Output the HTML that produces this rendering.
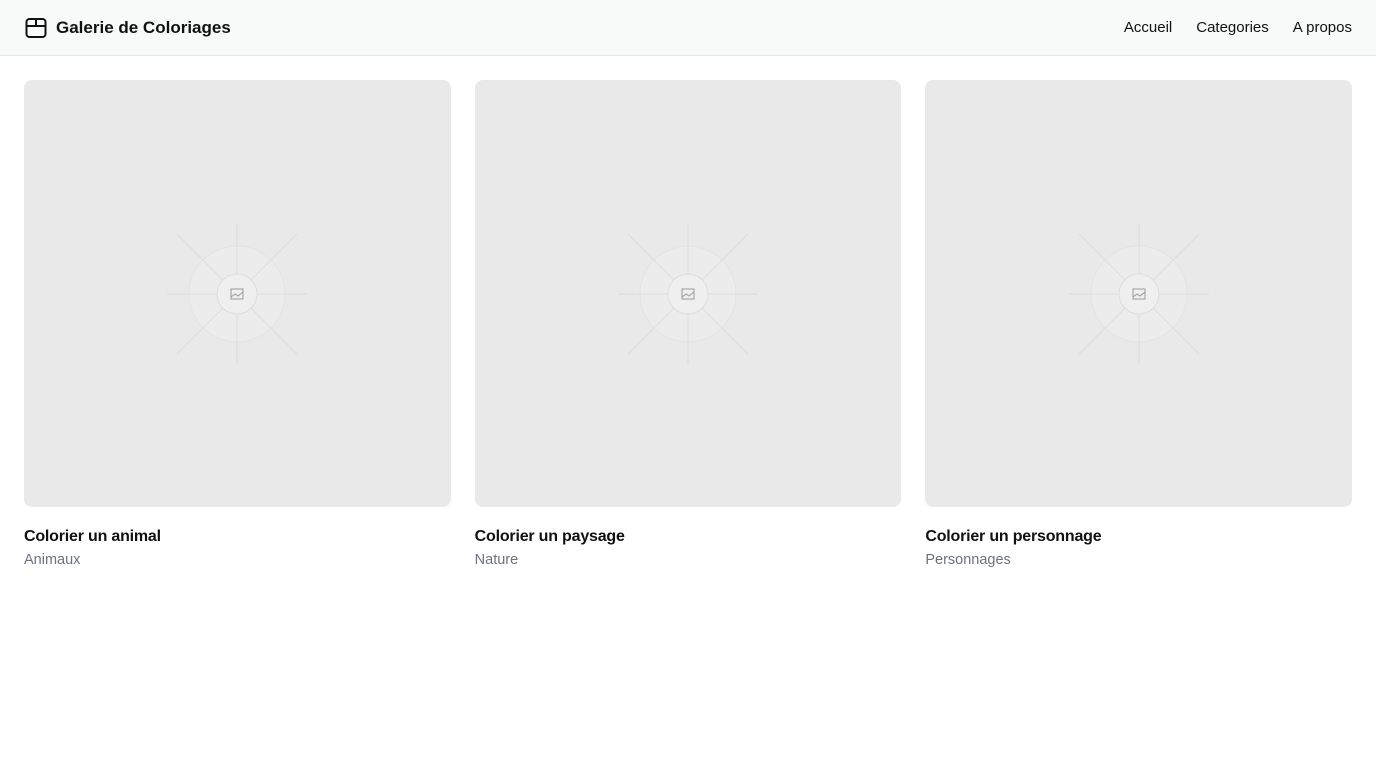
<!DOCTYPE html>
<html><head><meta charset="utf-8"><style>
*{box-sizing:border-box;margin:0;padding:0}
body{width:1376px;height:768px;background:#fff;font-family:"Liberation Sans",sans-serif;color:#111;overflow:hidden}
header{height:56px;background:#f8fafa;border-bottom:1px solid #e3e8e8;display:flex;align-items:center;justify-content:space-between;padding:0 24px}
.logo{display:flex;align-items:center;gap:8px;font-weight:bold;font-size:17px}
nav{display:flex;gap:24px;font-size:15px}
.grid{display:flex;gap:24px;padding:24px 24px 0}
.card{width:427px}
.img{height:427px;background:#e9e9e9;border-radius:8px;display:flex;align-items:center;justify-content:center}
.t{font-weight:bold;font-size:16px;margin-top:20px;line-height:20px;letter-spacing:-0.2px}
.s{color:#6b7280;font-size:14.5px;margin-top:5px}
</style></head><body>
<header><div class="logo"><svg width="24" height="24" viewBox="0 0 24 24" fill="none" stroke="#111" stroke-width="2" stroke-linejoin="round"><rect x="2.5" y="3" width="19" height="18" rx="3"/><path d="M2.5 10h19M12 3v7"/></svg>Galerie de Coloriages</div>
<nav><span>Accueil</span><span>Categories</span><span>A propos</span></nav></header>
<div class="grid">
<div class="card"><div class="img"><svg width="140" height="140" viewBox="0 0 140 140"><g stroke="#dcdcdc" stroke-width="1"><path d="M70 0v140M0 70h140M10 10l120 120M130 10L10 130"/></g><circle cx="70" cy="70" r="48" fill="#ececec" stroke="#e3e3e3"/><g stroke="#dedede"><path d="M70 22v96M22 70h96M36 36l68 68M104 36l-68 68"/></g><circle cx="70" cy="70" r="20" fill="#efefef" stroke="#dcdcdc"/><rect x="64" y="65" width="12" height="10" fill="none" stroke="#999" stroke-width="1"/><path d="M64 73l4-3 3 2 5-4" fill="none" stroke="#999"/></svg></div><div class="t">Colorier un animal</div><div class="s">Animaux</div></div>
<div class="card"><div class="img"><svg width="140" height="140" viewBox="0 0 140 140"><g stroke="#dcdcdc" stroke-width="1"><path d="M70 0v140M0 70h140M10 10l120 120M130 10L10 130"/></g><circle cx="70" cy="70" r="48" fill="#ececec" stroke="#e3e3e3"/><g stroke="#dedede"><path d="M70 22v96M22 70h96M36 36l68 68M104 36l-68 68"/></g><circle cx="70" cy="70" r="20" fill="#efefef" stroke="#dcdcdc"/><rect x="64" y="65" width="12" height="10" fill="none" stroke="#999" stroke-width="1"/><path d="M64 73l4-3 3 2 5-4" fill="none" stroke="#999"/></svg></div><div class="t">Colorier un paysage</div><div class="s">Nature</div></div>
<div class="card"><div class="img"><svg width="140" height="140" viewBox="0 0 140 140"><g stroke="#dcdcdc" stroke-width="1"><path d="M70 0v140M0 70h140M10 10l120 120M130 10L10 130"/></g><circle cx="70" cy="70" r="48" fill="#ececec" stroke="#e3e3e3"/><g stroke="#dedede"><path d="M70 22v96M22 70h96M36 36l68 68M104 36l-68 68"/></g><circle cx="70" cy="70" r="20" fill="#efefef" stroke="#dcdcdc"/><rect x="64" y="65" width="12" height="10" fill="none" stroke="#999" stroke-width="1"/><path d="M64 73l4-3 3 2 5-4" fill="none" stroke="#999"/></svg></div><div class="t">Colorier un personnage</div><div class="s">Personnages</div></div>
</div>
</body></html>
